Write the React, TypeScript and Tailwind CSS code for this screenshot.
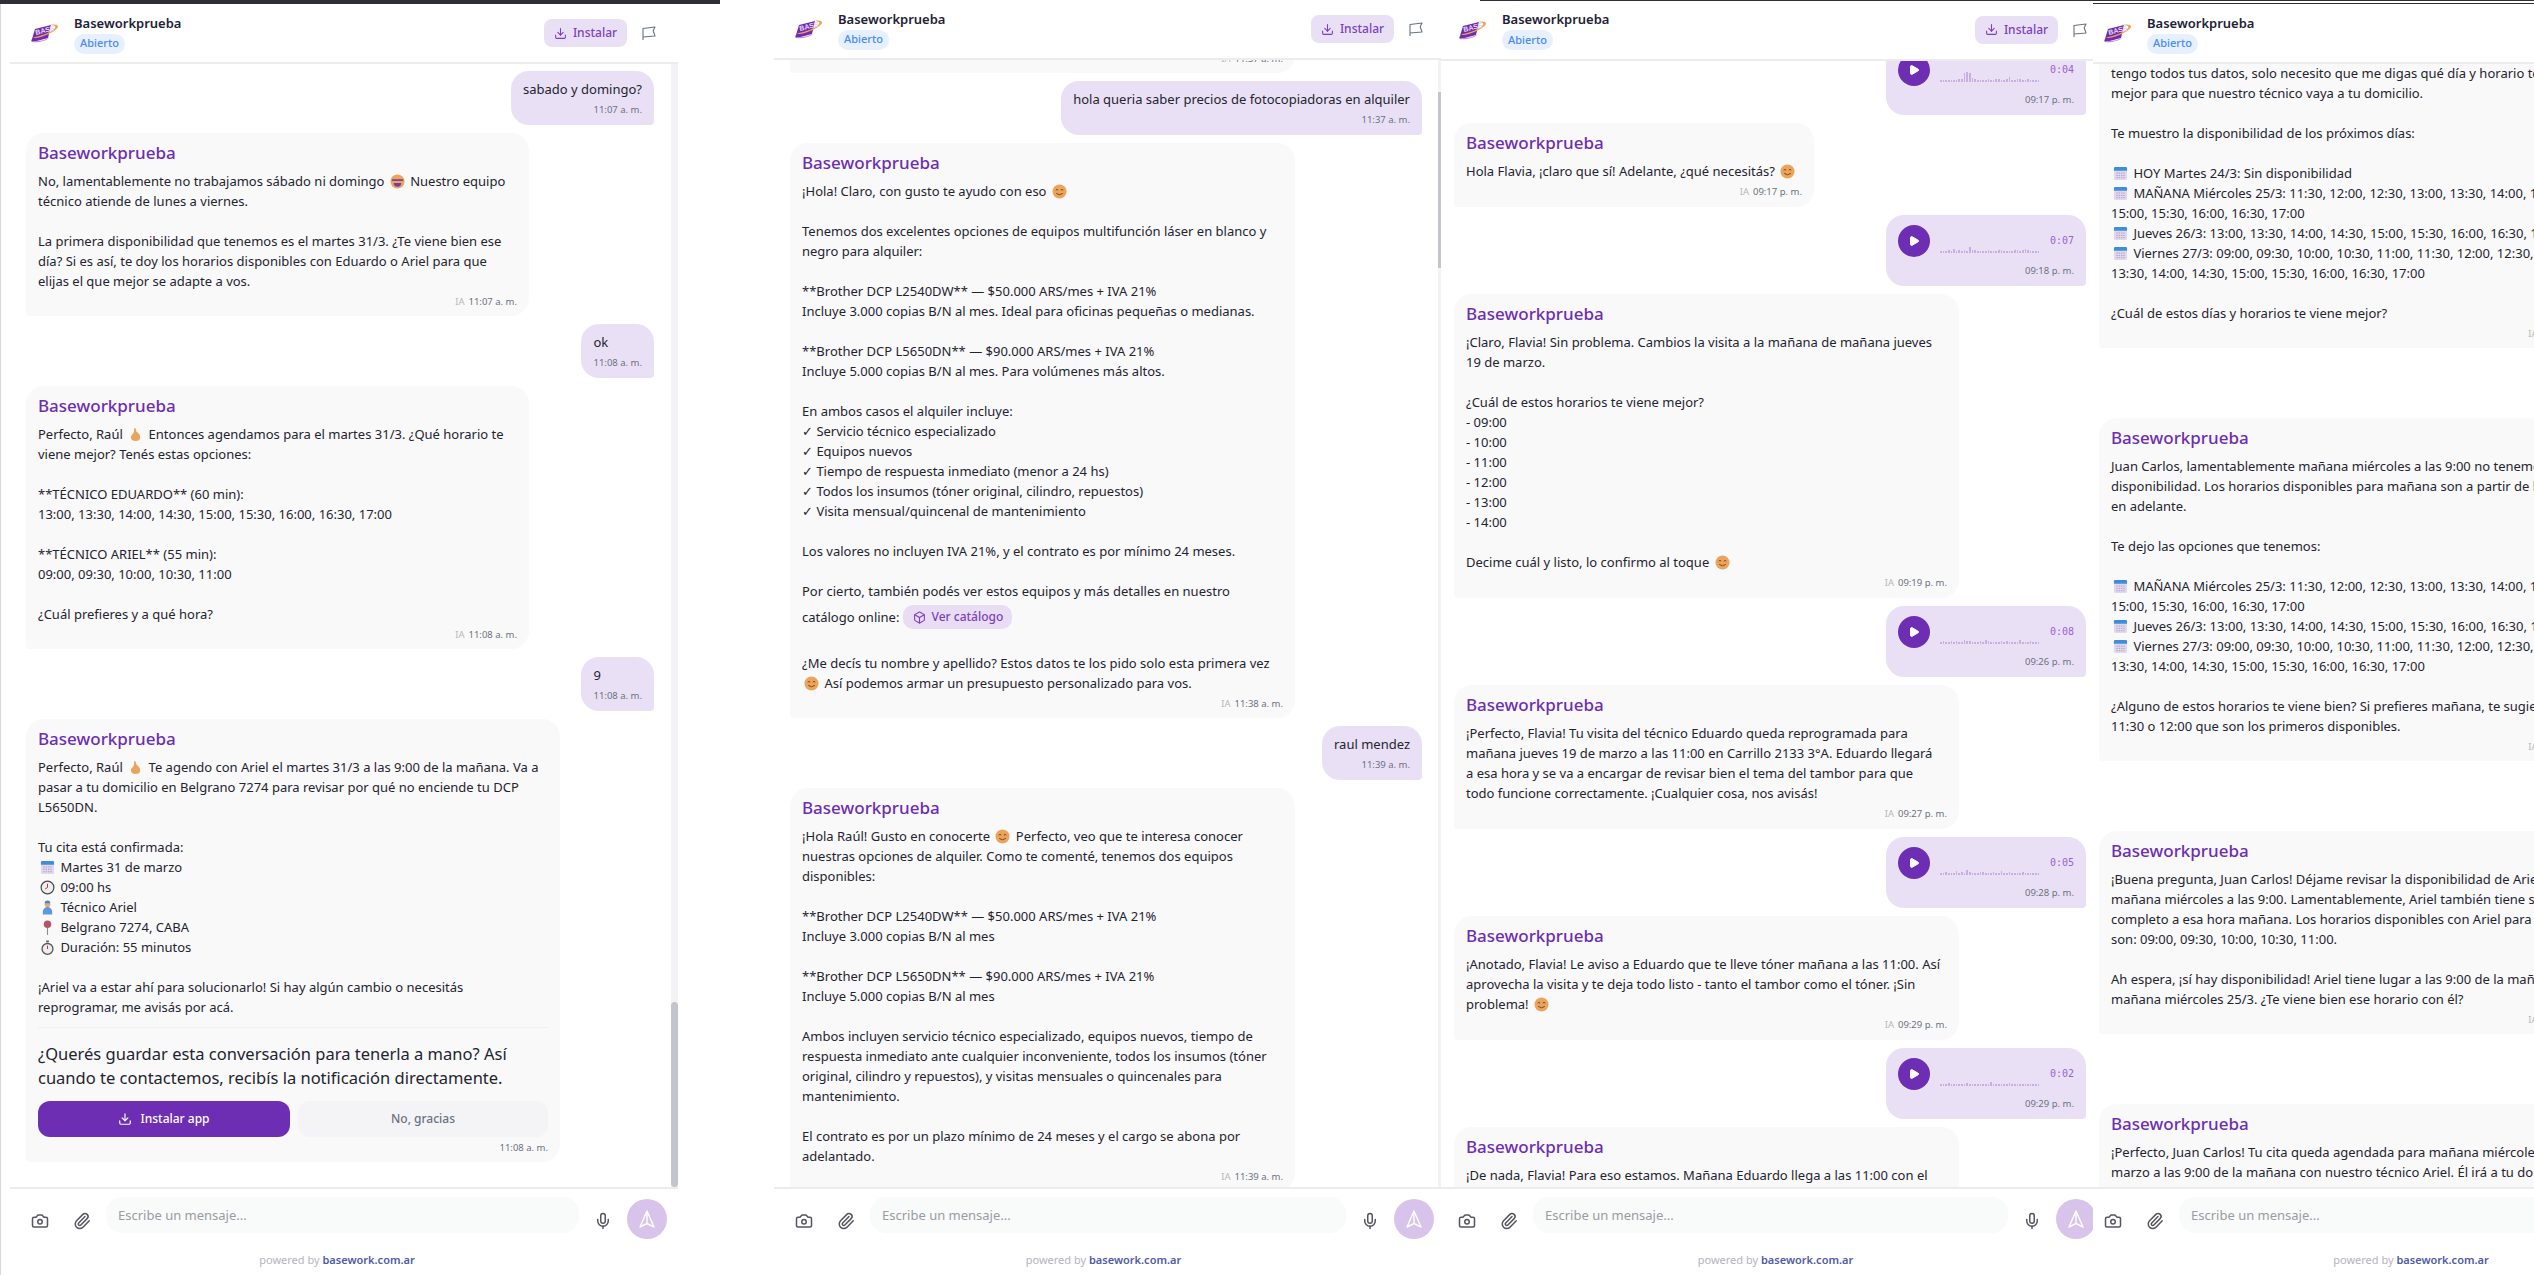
import type { ReactNode } from "react";
import { Box, Camera, Download, Mic, Paperclip, Play } from "lucide-react";

/* Small emoji drawings, because no emoji font is installed */
const Emoji = ({ name }: { name: string }) => {
  const cls = "mx-[2px] inline-block h-[15px] w-[15px] align-[-3px]";
  if (name === "smile" || name === "grin") {
    return (
      <svg viewBox="0 0 16 16" className={cls}>
        <circle cx="8" cy="8" r="7.5" fill="#eca45c" />
        {name === "grin" ? (
          <>
            <path d="M2 5.5h12v2H2z" fill="#7a4a9e" />
            <path d="M4 9.5h8a4 4 0 0 1-8 0z" fill="#7c3aa8" />
          </>
        ) : (
          <>
            <path d="M4 6.5q1.3-1.3 2.6 0M9.4 6.5q1.3-1.3 2.6 0" stroke="#6b4320" fill="none" />
            <path d="M4.5 10q3.5 3 7 0" stroke="#6b4320" fill="none" />
          </>
        )}
      </svg>
    );
  }
  if (name === "hand") {
    return (
      <svg viewBox="0 0 16 16" className={cls}>
        <path d="M7 1c1.5 0 1.5 2 2 4 2 1 4 3 4 6s-2 4-5 4-5-1.500-5-4 2-3 3-5 0-5 1-5z" fill="#eaa45e" />
      </svg>
    );
  }
  if (name === "cal") {
    return (
      <svg viewBox="0 0 16 16" className={cls}>
        <rect x="1" y="1" width="14" height="14" rx="1.500" fill="#e2d8ee" />
        <path d="M1 2.500A1.500 1.500 0 0 1 2.500 1h11A1.500 1.500 0 0 1 15 2.500V5H1z" fill="#3d8ede" />
        <path d="M3.500 7.500h9M3.500 10h9M3.500 12.500h9" stroke="#a99cc4" strokeDasharray="1.500 1" />
      </svg>
    );
  }
  if (name === "clock") {
    return (
      <svg viewBox="0 0 16 16" className={cls}>
        <circle cx="8" cy="8" r="6.800" fill="#f0eeee" stroke="#4a4a4f" strokeWidth="1.300" />
        <path d="M8 4v4l-2.500 1.500" stroke="#a33" fill="none" />
      </svg>
    );
  }
  if (name === "tech") {
    return (
      <svg viewBox="0 0 16 16" className={cls}>
        <circle cx="8" cy="4.500" r="3" fill="#e8a868" />
        <path d="M5 3.500a3 3 0 0 1 6 0z" fill="#3f86d8" />
        <path d="M3 15.500v-3a4 4 0 0 1 10 0v3z" fill="#5a9be0" />
      </svg>
    );
  }
  if (name === "pin") {
    return (
      <svg viewBox="0 0 16 16" className={cls}>
        <path d="M8 8v8" stroke="#8c8c90" strokeWidth="1.200" />
        <circle cx="8" cy="4.500" r="4" fill="#b8526a" />
      </svg>
    );
  }
  return (
    <svg viewBox="0 0 16 16" className={cls}>
      <path d="M6.500 0.500h3v2h-3z" fill="#66666c" />
      <circle cx="8" cy="9.500" r="5.800" fill="#ededed" stroke="#55555b" strokeWidth="1.400" />
      <path d="M8 6v3.500" stroke="#a33" />
    </svg>
  );
};

/* One string per line; {name} puts an emoji drawing in the line */
const Line = ({ text }: { text: string }) => {
  const parts = text.split(/\{(\w+)\}/);
  return (
    <div className="h-5 whitespace-pre">
      {parts.map((part, i) => (i % 2 === 1 ? <Emoji key={i} name={part} /> : part))}
    </div>
  );
};

const Agent = ({
  lines,
  time,
  className,
  ia = true,
  children,
}: {
  lines: string[];
  time: string;
  className: string;
  ia?: boolean;
  children?: ReactNode;
}) => (
  <div className={`shrink-0 rounded-[18px] rounded-bl-[4px] bg-[#f9f9f9] px-3 pt-2 text-[#1f2430] ${className}`}>
    <div className="mb-1.5 text-[17px] leading-6 font-medium text-[#6d2eb3]">Baseworkprueba</div>
    {lines.map((l, i) => (
      <Line key={i} text={l} />
    ))}
    {children}
    <div className="mt-1 flex h-[14px] items-center justify-end gap-1 text-[9.5px] leading-[14px] text-[#6b7280]">
      {ia && <span className="text-[#b8b8bc]">IA</span>}
      <span>{time}</span>
    </div>
  </div>
);

const User = ({ text, time }: { text: string; time: string }) => (
  <div className="w-fit shrink-0 self-end rounded-[18px] rounded-br-[4px] bg-[#e9e0f5] px-3 pt-2 pb-2 text-[#1f2430]">
    <div className="h-5 whitespace-pre">{text}</div>
    <div className="mt-1 h-[14px] text-right text-[9.5px] leading-[14px] text-[#6b7280]">{time}</div>
  </div>
);

const WAVES: Record<string, number[]> = {
  "0:04": [2, 2, 2, 2, 2, 2, 2, 3, 3, 9, 10, 9, 4, 3, 2, 2, 2, 2, 3, 2, 2, 3, 3, 2, 2, 3, 5, 2, 2, 3, 3, 2, 2, 3, 2, 2, 2, 2],
  "0:07": [2, 2, 2, 3, 2, 4, 2, 3, 2, 3, 2, 6, 3, 3, 2, 2, 2, 2, 3, 2, 2, 2, 3, 3, 2, 2, 2, 2, 3, 3, 2, 3, 4, 3, 2, 2, 2, 2],
  "0:08": [2, 3, 2, 2, 3, 2, 3, 2, 2, 4, 3, 3, 2, 2, 2, 3, 2, 4, 3, 2, 2, 2, 2, 3, 2, 3, 2, 2, 2, 2, 4, 2, 2, 2, 3, 2, 2, 2],
  "0:05": [2, 2, 3, 2, 2, 2, 4, 2, 3, 2, 5, 3, 2, 2, 2, 3, 3, 2, 2, 2, 3, 2, 2, 4, 2, 2, 3, 2, 2, 2, 2, 3, 2, 2, 2, 2, 2, 2],
  "0:02": [2, 2, 2, 3, 2, 2, 2, 2, 2, 2, 3, 2, 2, 2, 2, 2, 2, 2, 2, 4, 2, 2, 2, 2, 2, 2, 3, 2, 2, 2, 2, 2, 2, 2, 2, 2, 2, 2],
};

const Audio = ({ duration, time, className = "" }: { duration: string; time: string; className?: string }) => (
  <div className={`w-[200px] shrink-0 self-end rounded-[18px] rounded-br-[4px] bg-[#e9e0f5] px-3 pt-2.5 pb-2 ${className}`}>
    <div className="flex h-8 items-center gap-2.5">
      <div className="flex h-8 w-8 shrink-0 items-center justify-center rounded-full bg-[#6d2eb3]">
        <Play size={12} className="fill-white text-white" />
      </div>
      <div className="flex h-8 w-[100px] items-end gap-[1px] pb-[4px]">
        {WAVES[duration].map((h, i) => (
          <div key={i} className="w-[1.650px] bg-[#c9aee2]" style={{ height: h }} />
        ))}
      </div>
      <div className="flex-1 text-right font-['DejaVu_Sans_Mono',monospace] text-[10px] text-[#9a62cf]">{duration}</div>
    </div>
    <div className="mt-[7px] h-[14px] text-right text-[9.5px] leading-[14px] text-[#6b7280]">{time}</div>
  </div>
);

const Logo = () => (
  <svg viewBox="0 0 31 20" className="h-5 w-[31px] shrink-0">
    <path d="M4 19c-2 0-2-2-1-3L6 6l16-4-3 13z" fill="#6f2cab" />
    <path d="M4 15C10 16 27 9 29 4c1-3-6-3-9-2 5 0 7 1 6 3-3 4-14 8-20 9z" fill="#f0a55a" />
    <path d="M3 19c6 1 14-1 17-4l-3 1c-4 2-9 2-13 2z" fill="#c88be0" />
    <text x="7" y="12" fontSize="7" fontWeight="700" fill="#e6d4f5" fontFamily="Liberation Sans, sans-serif" transform="rotate(-14 7 12)">
      BASE
    </text>
  </svg>
);

const Flag = () => (
  <svg viewBox="0 0 16 16" className="h-4 w-4 shrink-0" fill="none" stroke="#6b7280" strokeWidth="1.100" strokeLinejoin="round">
    <path d="M2 15V3.500L14 2l-1.800 3.800L14 11 2 12" />
  </svg>
);

const SendPlane = () => (
  <svg viewBox="0 0 20 20" className="h-5 w-5" fill="none" stroke="white" strokeWidth="1.400" strokeLinejoin="round">
    <path d="M10 2 17 18 10 14.500 3 18z" />
    <path d="M10 2v12.500" />
  </svg>
);

const Panel = ({
  className,
  headClass,
  mainClass,
  footClass,
  creditClass,
  scrollbar,
  children,
}: {
  className: string;
  headClass: string;
  mainClass: string;
  footClass: string;
  creditClass: string;
  scrollbar?: ReactNode;
  children: ReactNode;
}) => (
  <section className={`flex h-full shrink-0 flex-col bg-white ${className}`}>
    <header className={`flex shrink-0 items-center border-b-2 border-[#ececec] ${headClass}`}>
      <Logo />
      <div className="ml-3.5">
        <div className="text-[13px] leading-5 font-semibold text-[#1e2235]">Baseworkprueba</div>
        <div className="mt-[1px] flex h-5 w-fit items-center rounded-full bg-[#e6f0ff] px-[6px] text-[11px] font-medium text-[#4a8af4]">Abierto</div>
      </div>
      <div className="ml-auto flex h-7 w-[83px] items-center justify-center gap-1.5 rounded-lg bg-[#e9e0f5] text-[12px] font-medium text-[#7c3fbd]">
        <Download size={13} />
        Instalar
      </div>
      <div className="ml-3.5">
        <Flag />
      </div>
    </header>
    <div className="relative min-h-0 flex-1">
      <div className={`flex h-full flex-col gap-2 overflow-hidden text-[13px] leading-5 ${mainClass}`}>{children}</div>
      {scrollbar}
    </div>
    <footer className="h-[88px] shrink-0 border-t-2 border-[#ececec]">
      <div className={`mt-[8px] flex h-[42px] items-end gap-1.5 ${footClass}`}>
        <div className="flex h-9 w-9 items-center justify-center text-[#55555e]">
          <Camera size={18} />
        </div>
        <div className="flex h-9 w-9 items-center justify-center text-[#55555e]">
          <Paperclip size={18} />
        </div>
        <div className="flex h-9 flex-1 items-center self-start rounded-2xl bg-[#f9fafa] px-3 pt-[1px] text-[13px] text-[#9a9ca3]">Escribe un mensaje...</div>
        <div className="flex h-9 w-9 items-center justify-center text-[#55555e]">
          <Mic size={18} />
        </div>
        <div className="flex h-10 w-10 shrink-0 items-center justify-center rounded-full bg-[#d8c3ea]">
          <SendPlane />
        </div>
      </div>
      <div className={`mt-[13px] text-center text-[11px] leading-4 text-[#b4b4bc] ${creditClass}`}>
        powered by <span className="font-semibold text-[#4f5ca6]">basework.com.ar</span>
      </div>
    </footer>
  </section>
);

const MANANA = "{cal} MAÑANA Miércoles 25/3: 11:30, 12:00, 12:30, 13:00, 13:30, 14:00, 14:30,";
const JUEVES = "{cal} Jueves 26/3: 13:00, 13:30, 14:00, 14:30, 15:00, 15:30, 16:00, 16:30, 17:00";
const VIERNES = "{cal} Viernes 27/3: 09:00, 09:30, 10:00, 10:30, 11:00, 11:30, 12:00, 12:30, 13:00,";

export default function App() {
  return (
    <div className="relative flex h-[1275px] w-[2534px] overflow-hidden bg-white font-['Noto_Sans',sans-serif]">
      {/* capture edges between the browser windows */}
      <div className="absolute top-0 left-0 z-10 h-1 w-[720px] bg-[#2f2f35]" />
      <div className="absolute top-0 left-[1480px] z-10 h-[1px] w-[1054px] bg-[#2f2f35]" />
      <div className="absolute top-[3px] left-[2093px] z-10 h-[1px] w-[441px] bg-[#2f2f35]" />

      {/* Window 1 */}
      <div className="mr-[96px] w-[678px] shrink-0 border-l border-[#d8d8d8] pl-[9px]">
        <Panel
          className="w-[668px]"
          headClass="h-[64px] pt-1 pl-[19px] pr-[21px]"
          mainClass="pt-[7px] pl-4 pr-[24px]"
          footClass="pl-3 pr-[11px]"
          creditClass="pr-[14px]"
          scrollbar={
            <div className="absolute top-0 right-0 bottom-0 w-[7px] bg-[#f3f3f6]">
              <div className="absolute right-0 bottom-0 h-[185px] w-[7px] rounded-full bg-[#c4c4cc]" />
            </div>
          }
        >
          <User text="sabado y domingo?" time="11:07 a. m." />
          <Agent
            className="w-[503px] pb-[7px]"
            time="11:07 a. m."
            lines={[
              "No, lamentablemente no trabajamos sábado ni domingo {grin} Nuestro equipo",
              "técnico atiende de lunes a viernes.",
              "",
              "La primera disponibilidad que tenemos es el martes 31/3. ¿Te viene bien ese",
              "día? Si es así, te doy los horarios disponibles con Eduardo o Ariel para que",
              "elijas el que mejor se adapte a vos.",
            ]}
          />
          <User text="ok" time="11:08 a. m." />
          <Agent
            className="w-[503px] pb-[7px]"
            time="11:08 a. m."
            lines={[
              "Perfecto, Raúl {hand} Entonces agendamos para el martes 31/3. ¿Qué horario te",
              "viene mejor? Tenés estas opciones:",
              "",
              "**TÉCNICO EDUARDO** (60 min):",
              "13:00, 13:30, 14:00, 14:30, 15:00, 15:30, 16:00, 16:30, 17:00",
              "",
              "**TÉCNICO ARIEL** (55 min):",
              "09:00, 09:30, 10:00, 10:30, 11:00",
              "",
              "¿Cuál prefieres y a qué hora?",
            ]}
          />
          <User text="9" time="11:08 a. m." />
          <Agent
            className="w-[534px] pb-[7px]"
            ia={false}
            time="11:08 a. m."
            lines={[
              "Perfecto, Raúl {hand} Te agendo con Ariel el martes 31/3 a las 9:00 de la mañana. Va a",
              "pasar a tu domicilio en Belgrano 7274 para revisar por qué no enciende tu DCP",
              "L5650DN.",
              "",
              "Tu cita está confirmada:",
              "{cal} Martes 31 de marzo",
              "{clock} 09:00 hs",
              "{tech} Técnico Ariel",
              "{pin} Belgrano 7274, CABA",
              "{watch} Duración: 55 minutos",
              "",
              "¡Ariel va a estar ahí para solucionarlo! Si hay algún cambio o necesitás",
              "reprogramar, me avisás por acá.",
            ]}
          >
            <div className="mt-2.5 border-t border-[#f0f0f0] pt-3.5">
              <div className="text-[16.500px] leading-6">
                ¿Querés guardar esta conversación para tenerla a mano? Así
                <br />
                cuando te contactemos, recibís la notificación directamente.
              </div>
              <div className="mt-[11px] flex gap-2">
                <div className="flex h-9 w-[252px] items-center justify-center gap-2 rounded-xl bg-[#6d2eb3] text-[12px] font-medium text-white">
                  <Download size={14} />
                  Instalar app
                </div>
                <div className="flex h-9 flex-1 items-center justify-center rounded-xl bg-[#f4f4f6] text-[12px] font-medium text-[#6b7280]">No, gracias</div>
              </div>
            </div>
          </Agent>
        </Panel>
      </div>

      {/* Window 2 */}
      <Panel
        className="w-[667px]"
        headClass="h-[60px] pl-[19px] pr-[17px]"
        mainClass="pl-4 pr-[19px]"
        footClass="pl-3 pr-[7px]"
        creditClass="pr-2"
        scrollbar={
          <div className="absolute top-0 right-0 bottom-0 w-[3px] bg-[#f3f3f6]">
            <div className="absolute top-[32px] right-0 h-[176px] w-[3px] bg-[#c4c4cc]" />
          </div>
        }
      >
        <Agent className="-mt-[70px] w-[505px] pb-[7px]" time="11:37 a. m." lines={["¡Hola! ¿En qué te puedo ayudar?"]} />
        <User text="hola queria saber precios de fotocopiadoras en alquiler" time="11:37 a. m." />
        <Agent
          className="w-[505px] pb-[7px]"
          time="11:38 a. m."
          lines={[
            "¡Hola! Claro, con gusto te ayudo con eso {smile}",
            "",
            "Tenemos dos excelentes opciones de equipos multifunción láser en blanco y",
            "negro para alquiler:",
            "",
            "**Brother DCP L2540DW** — $50.000 ARS/mes + IVA 21%",
            "Incluye 3.000 copias B/N al mes. Ideal para oficinas pequeñas o medianas.",
            "",
            "**Brother DCP L5650DN** — $90.000 ARS/mes + IVA 21%",
            "Incluye 5.000 copias B/N al mes. Para volúmenes más altos.",
            "",
            "En ambos casos el alquiler incluye:",
            "✓ Servicio técnico especializado",
            "✓ Equipos nuevos",
            "✓ Tiempo de respuesta inmediato (menor a 24 hs)",
            "✓ Todos los insumos (tóner original, cilindro, repuestos)",
            "✓ Visita mensual/quincenal de mantenimiento",
            "",
            "Los valores no incluyen IVA 21%, y el contrato es por mínimo 24 meses.",
            "",
            "Por cierto, también podés ver estos equipos y más detalles en nuestro",
          ]}
        >
          <div className="flex h-8 items-center whitespace-pre">
            catálogo online:
            <span className="ml-1 flex h-6 w-[109px] items-center justify-center gap-1.5 rounded-[10px] bg-[#e9ddf4] text-[12px] font-medium text-[#7c3fbd]">
              <Box size={13} />
              Ver catálogo
            </span>
          </div>
          <Line text="" />
          <Line text="¿Me decís tu nombre y apellido? Estos datos te los pido solo esta primera vez" />
          <Line text="{smile} Así podemos armar un presupuesto personalizado para vos." />
        </Agent>
        <User text="raul mendez" time="11:39 a. m." />
        <Agent
          className="w-[505px] pb-[7px]"
          time="11:39 a. m."
          lines={[
            "¡Hola Raúl! Gusto en conocerte {smile} Perfecto, veo que te interesa conocer",
            "nuestras opciones de alquiler. Como te comenté, tenemos dos equipos",
            "disponibles:",
            "",
            "**Brother DCP L2540DW** — $50.000 ARS/mes + IVA 21%",
            "Incluye 3.000 copias B/N al mes",
            "",
            "**Brother DCP L5650DN** — $90.000 ARS/mes + IVA 21%",
            "Incluye 5.000 copias B/N al mes",
            "",
            "Ambos incluyen servicio técnico especializado, equipos nuevos, tiempo de",
            "respuesta inmediato ante cualquier inconveniente, todos los insumos (tóner",
            "original, cilindro y repuestos), y visitas mensuales o quincenales para",
            "mantenimiento.",
            "",
            "El contrato es por un plazo mínimo de 24 meses y el cargo se abona por",
            "adelantado.",
          ]}
        />
      </Panel>

      {/* Window 3, covered on the right by window 4 */}
      <div className="w-[652px] shrink-0 overflow-hidden">
        <Panel
          className="w-[669px]"
          headClass="h-[61px] pl-4 pr-[22px]"
          mainClass="pl-[13px] pr-[24px]"
          footClass="pl-2 pr-[14px]"
          creditClass=""
        >
          <Audio className="-mt-[17px]" duration="0:04" time="09:17 p. m." />
          <Agent className="w-[360px] pb-2" time="09:17 p. m." lines={["Hola Flavia, ¡claro que sí! Adelante, ¿qué necesitás? {smile}"]} />
          <Audio duration="0:07" time="09:18 p. m." />
          <Agent
            className="w-[505px] pb-2"
            time="09:19 p. m."
            lines={[
              "¡Claro, Flavia! Sin problema. Cambios la visita a la mañana de mañana jueves",
              "19 de marzo.",
              "",
              "¿Cuál de estos horarios te viene mejor?",
              "- 09:00",
              "- 10:00",
              "- 11:00",
              "- 12:00",
              "- 13:00",
              "- 14:00",
              "",
              "Decime cuál y listo, lo confirmo al toque {smile}",
            ]}
          />
          <Audio duration="0:08" time="09:26 p. m." />
          <Agent
            className="w-[505px] pb-2"
            time="09:27 p. m."
            lines={[
              "¡Perfecto, Flavia! Tu visita del técnico Eduardo queda reprogramada para",
              "mañana jueves 19 de marzo a las 11:00 en Carrillo 2133 3°A. Eduardo llegará",
              "a esa hora y se va a encargar de revisar bien el tema del tambor para que",
              "todo funcione correctamente. ¡Cualquier cosa, nos avisás!",
            ]}
          />
          <Audio duration="0:05" time="09:28 p. m." />
          <Agent
            className="w-[505px] pb-2"
            time="09:29 p. m."
            lines={[
              "¡Anotado, Flavia! Le aviso a Eduardo que te lleve tóner mañana a las 11:00. Así",
              "aprovecha la visita y te deja todo listo - tanto el tambor como el tóner. ¡Sin",
              "problema! {smile}",
            ]}
          />
          <Audio duration="0:02" time="09:29 p. m." />
          <Agent
            className="w-[505px] pb-2"
            time="09:30 p. m."
            lines={["¡De nada, Flavia! Para eso estamos. Mañana Eduardo llega a las 11:00 con el", "tóner para dejar todo listo."]}
          />
        </Panel>
      </div>

      {/* Window 4, runs off the right edge */}
      <div className="w-[441px] shrink-0 overflow-hidden">
        <div className="-ml-[10px] h-full w-[668px]">
          <Panel
            className="w-[668px]"
            headClass="h-[64px] pt-1 pl-[19px] pr-[21px]"
            mainClass="pl-4 pr-[24px]"
            footClass="pl-3 pr-3"
            creditClass="pr-3"
          >
            <Agent
              className="-mt-[39px] w-[503px] pb-[7px]"
              time="10:41 a. m."
              lines={[
                "tengo todos tus datos, solo necesito que me digas qué día y horario te viene",
                "mejor para que nuestro técnico vaya a tu domicilio.",
                "",
                "Te muestro la disponibilidad de los próximos días:",
                "",
                "{cal} HOY Martes 24/3: Sin disponibilidad",
                MANANA,
                "15:00, 15:30, 16:00, 16:30, 17:00",
                JUEVES,
                VIERNES,
                "13:30, 14:00, 14:30, 15:00, 15:30, 16:00, 16:30, 17:00",
                "",
                "¿Cuál de estos días y horarios te viene mejor?",
              ]}
            />
            <User text="mañana a las 9" time="10:42 a. m." />
            <Agent
              className="w-[503px] pb-[7px]"
              time="10:42 a. m."
              lines={[
                "Juan Carlos, lamentablemente mañana miércoles a las 9:00 no tenemos",
                "disponibilidad. Los horarios disponibles para mañana son a partir de las 11:30",
                "en adelante.",
                "",
                "Te dejo las opciones que tenemos:",
                "",
                MANANA,
                "15:00, 15:30, 16:00, 16:30, 17:00",
                JUEVES,
                VIERNES,
                "13:30, 14:00, 14:30, 15:00, 15:30, 16:00, 16:30, 17:00",
                "",
                "¿Alguno de estos horarios te viene bien? Si prefieres mañana, te sugiero",
                "11:30 o 12:00 que son los primeros disponibles.",
              ]}
            />
            <User text="mañana a las 9 con ariel?" time="10:43 a. m." />
            <Agent
              className="w-[503px] pb-[7px]"
              time="10:43 a. m."
              lines={[
                "¡Buena pregunta, Juan Carlos! Déjame revisar la disponibilidad de Ariel para",
                "mañana miércoles a las 9:00. Lamentablemente, Ariel también tiene su cupo",
                "completo a esa hora mañana. Los horarios disponibles con Ariel para mañana",
                "son: 09:00, 09:30, 10:00, 10:30, 11:00.",
                "",
                "Ah espera, ¡sí hay disponibilidad! Ariel tiene lugar a las 9:00 de la mañana de",
                "mañana miércoles 25/3. ¿Te viene bien ese horario con él?",
              ]}
            />
            <User text="si, con ariel" time="10:44 a. m." />
            <Agent
              className="w-[503px] pb-[7px]"
              time="10:44 a. m."
              lines={[
                "¡Perfecto, Juan Carlos! Tu cita queda agendada para mañana miércoles 25 de",
                "marzo a las 9:00 de la mañana con nuestro técnico Ariel. Él irá a tu domicilio",
                "en Carrillo 2133. Ha llegado a agendar tu visita de manera exitosa.",
              ]}
            />
          </Panel>
        </div>
      </div>
    </div>
  );
}
